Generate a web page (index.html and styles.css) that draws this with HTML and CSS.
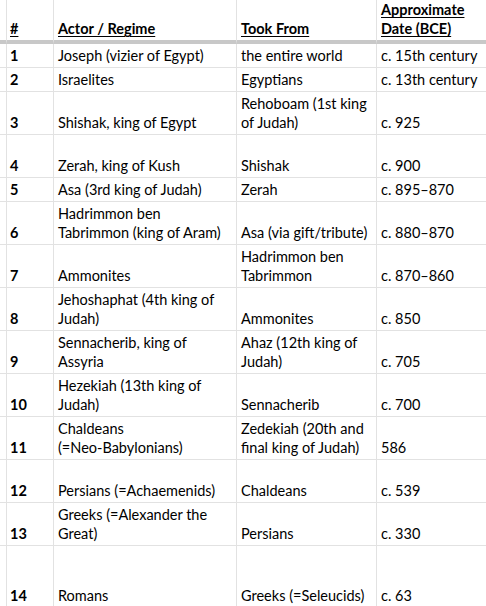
FILE: index.html
```html
<!DOCTYPE html>
<html lang="en">
<head>
<meta charset="utf-8">
<title>Actors and Regimes</title>
<link rel="stylesheet" href="styles.css">
</head>
<body>
<div class="sheet">
  <div class="row head">
    <div class="c c0"></div>
    <div class="c c1"><u>#</u></div>
    <div class="c c2"><u>Actor / Regime</u></div>
    <div class="c c3"><u>Took From</u></div>
    <div class="c c4"><u>Approximate</u><u>Date (BCE)</u></div>
  </div>
  <div class="row">
    <div class="c c0"></div><div class="c c1">1</div>
    <div class="c c2">Joseph (vizier of Egypt)</div>
    <div class="c c3">the entire world</div>
    <div class="c c4">c. 15th century</div>
  </div>
  <div class="row">
    <div class="c c0"></div><div class="c c1">2</div>
    <div class="c c2">Israelites</div>
    <div class="c c3">Egyptians</div>
    <div class="c c4">c. 13th century</div>
  </div>
  <div class="row">
    <div class="c c0"></div><div class="c c1">3</div>
    <div class="c c2">Shishak, king of Egypt</div>
    <div class="c c3">Rehoboam (1st king<br>of Judah)</div>
    <div class="c c4">c. 925</div>
  </div>
  <div class="row tall2">
    <div class="c c0"></div><div class="c c1">4</div>
    <div class="c c2">Zerah, king of Kush</div>
    <div class="c c3">Shishak</div>
    <div class="c c4">c. 900</div>
  </div>
  <div class="row">
    <div class="c c0"></div><div class="c c1">5</div>
    <div class="c c2">Asa (3rd king of Judah)</div>
    <div class="c c3">Zerah</div>
    <div class="c c4">c. 895–870</div>
  </div>
  <div class="row">
    <div class="c c0"></div><div class="c c1">6</div>
    <div class="c c2">Hadrimmon ben<br>Tabrimmon (king of Aram)</div>
    <div class="c c3">Asa (via gift/tribute)</div>
    <div class="c c4">c. 880–870</div>
  </div>
  <div class="row">
    <div class="c c0"></div><div class="c c1">7</div>
    <div class="c c2">Ammonites</div>
    <div class="c c3">Hadrimmon ben<br>Tabrimmon</div>
    <div class="c c4">c. 870–860</div>
  </div>
  <div class="row">
    <div class="c c0"></div><div class="c c1">8</div>
    <div class="c c2">Jehoshaphat (4th king of<br>Judah)</div>
    <div class="c c3">Ammonites</div>
    <div class="c c4">c. 850</div>
  </div>
  <div class="row">
    <div class="c c0"></div><div class="c c1">9</div>
    <div class="c c2">Sennacherib, king of<br>Assyria</div>
    <div class="c c3">Ahaz (12th king of<br>Judah)</div>
    <div class="c c4">c. 705</div>
  </div>
  <div class="row">
    <div class="c c0"></div><div class="c c1">10</div>
    <div class="c c2">Hezekiah (13th king of<br>Judah)</div>
    <div class="c c3">Sennacherib</div>
    <div class="c c4">c. 700</div>
  </div>
  <div class="row">
    <div class="c c0"></div><div class="c c1">11</div>
    <div class="c c2">Chaldeans<br>(=Neo-Babylonians)</div>
    <div class="c c3">Zedekiah (20th and<br>final king of Judah)</div>
    <div class="c c4">586</div>
  </div>
  <div class="row tall2">
    <div class="c c0"></div><div class="c c1">12</div>
    <div class="c c2">Persians (=Achaemenids)</div>
    <div class="c c3">Chaldeans</div>
    <div class="c c4">c. 539</div>
  </div>
  <div class="row">
    <div class="c c0"></div><div class="c c1">13</div>
    <div class="c c2">Greeks (=Alexander the<br>Great)</div>
    <div class="c c3">Persians</div>
    <div class="c c4">c. 330</div>
  </div>
  <div class="row tall3">
    <div class="c c0"></div><div class="c c1">14</div>
    <div class="c c2">Romans</div>
    <div class="c c3">Greeks (=Seleucids)</div>
    <div class="c c4">c. 63</div>
  </div>
</div>
</body>
</html>
```
FILE: styles.css
```css
html, body {
  margin: 0;
  padding: 0;
  overflow: hidden;
  background: #fff;
}
body {
  font-family: Lato, "Liberation Sans", sans-serif;
  font-size: 14.5px;
  line-height: 19px;
  color: #000;
}
.sheet {
  display: grid;
  grid-template-columns: 7px 47px 183px 140px 109px;
  width: 486px;
}
.row {
  display: contents;
}
.c {
  box-sizing: border-box;
  display: flex;
  flex-direction: column;
  justify-content: flex-end;
  padding: 2px 4px;
  border-right: 1px solid #e2e2e2;
  border-bottom: 1px solid #e2e2e2;
  white-space: nowrap;
  min-height: 24px;
}
.c0 { padding: 0; }
.c1 { font-weight: 700; padding-left: 3px; }
.c4 { border-right: 0; }
.head .c {
  font-weight: 700;
  padding-top: 0;
  min-height: 44px;
  border-bottom: 4px solid #c8c8c8;
}
.head u { text-decoration: underline; text-underline-offset: 2px; }
.tall2 .c { min-height: 43px; }
.tall3 .c { min-height: 62px; }
```
